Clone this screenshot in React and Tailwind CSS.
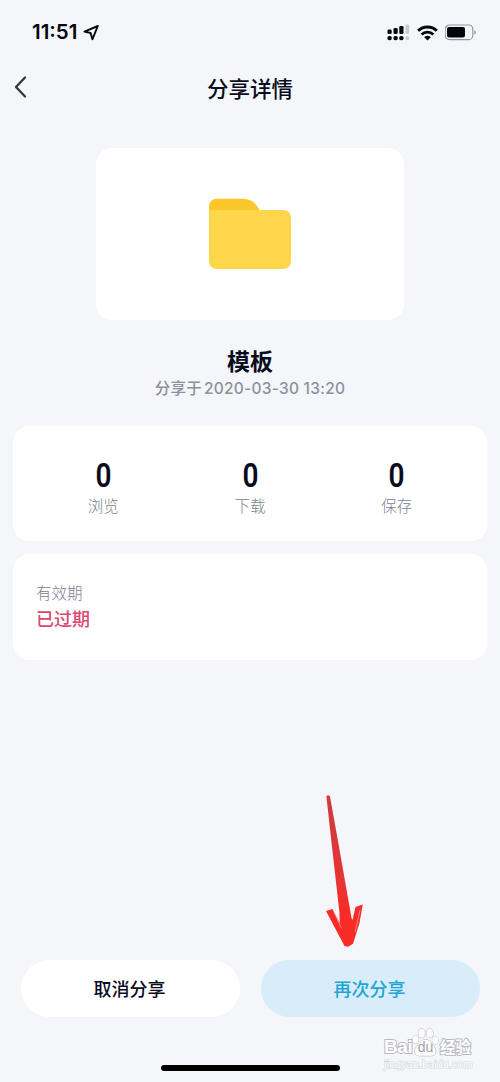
import React from "react";

const stats = [
  { label: "浏览", value: 0 },
  { label: "下载", value: 0 },
  { label: "保存", value: 0 },
];

const SignalIcon = () => (
  <svg width="23" height="17" viewBox="0 0 23 17" fill="#05070d">
    <rect x="0.5" y="5.5" width="4.2" height="4.5" rx="1.3" />
    <rect x="6.5" y="4" width="4.2" height="6" rx="1.3" />
    <rect x="12.3" y="2" width="4.2" height="8" rx="1.3" />
    <rect x="18.4" y="0.5" width="3.8" height="9.5" rx="1.3" fill="#c9cbd0" />
    <rect x="0.5" y="12" width="4.2" height="4.2" rx="1.6" />
    <rect x="6.5" y="12" width="4.2" height="4.2" rx="1.6" />
    <rect x="12.3" y="12" width="4.2" height="4.2" rx="1.6" />
    <rect x="18.4" y="12.2" width="3.8" height="3.8" rx="1.6" fill="#c9cbd0" />
  </svg>
);

const WifiIcon = () => (
  <svg width="21" height="16" viewBox="0 0 21 16" fill="none" stroke="#05070d">
    <path d="M1.1 5.8C6.3 0.7 14.7 0.7 19.9 5.8" strokeWidth="3" />
    <path d="M4.6 9.6C7.9 6.4 13.1 6.4 16.4 9.6" strokeWidth="2.8" />
    <path
      d="M7.2 12.2C9.1 10.4 11.9 10.4 13.8 12.2L10.5 15.6Z"
      fill="#05070d"
      stroke="none"
    />
  </svg>
);

const BatteryIcon = () => (
  <svg width="33" height="17" viewBox="0 0 33 17" fill="none">
    <rect
      x="0.2"
      y="1"
      width="27.6"
      height="14.6"
      rx="4.2"
      stroke="#94969c"
      strokeWidth="1.2"
    />
    <rect x="2" y="3" width="18" height="10.6" rx="2" fill="#05070d" />
    <path d="M29.5 6.2C31.2 6.9 31.2 9.9 29.5 10.6Z" fill="#75777d" />
  </svg>
);

const StatusBar = () => (
  <div className="flex h-[63px] items-center justify-between pl-8 pr-[22px] pt-0.5 font-['Inter','Liberation_Sans',sans-serif]">
    <div className="flex items-center gap-[6px]">
      <span className="text-[20.5px] font-semibold leading-none text-[#05070d]">
        11:51
      </span>
      <svg width="17" height="17" viewBox="0 0 17 17" fill="none">
        <path
          d="M14.8 2L1.5 7.6L7.6 9L9.4 15.3Z"
          stroke="#05070d"
          strokeWidth="1.9"
          strokeLinejoin="round"
        />
      </svg>
    </div>
    <div className="flex items-center gap-[7px]">
      <SignalIcon />
      <WifiIcon />
      <BatteryIcon />
    </div>
  </div>
);

const Header = () => (
  <header className="grid h-12 grid-cols-[1fr_auto_1fr] items-center px-3.5">
    <button type="button" aria-label="返回" className="justify-self-start">
      <svg width="13" height="24" viewBox="0 0 13 24" fill="none">
        <path
          d="M11 2.5L2 12L11 21.5"
          stroke="#34363c"
          strokeWidth="2.3"
          strokeLinecap="round"
          strokeLinejoin="round"
        />
      </svg>
    </button>
    <h1 className="pt-[5px] text-[21.5px] font-medium leading-none">
      分享详情
    </h1>
  </header>
);

const FolderIcon = () => (
  <svg width="83" height="72" viewBox="0 0 83 72">
    <path
      d="M0 20V9C0 4 3 0.8 8.5 0.8H34C42 0.8 47 5 51 13V20Z"
      fill="#fac629"
    />
    <path
      d="M0 12H73.5C79 12 82 15 82 20.5V62C82 68 79 71 73.5 71H8.5C3 71 0 68 0 62Z"
      fill="#fdd649"
    />
  </svg>
);

const Arrow = () => (
  <svg
    width="40"
    height="154"
    viewBox="0 0 40 154"
    className="pointer-events-none absolute left-[324px] top-[794px]"
  >
    <defs>
      <linearGradient id="shaft" x1="0" y1="0" x2="0" y2="1">
        <stop offset="0" stopColor="#cf3c40" />
        <stop offset="0.55" stopColor="#e63434" />
        <stop offset="0.8" stopColor="#fa2b27" />
      </linearGradient>
    </defs>
    <path
      d="M2.4 2.5Q4 0 6 2.5L15 52.7L27.5 124L28.5 126L31.5 113L38.7 110.5L35.5 129L29 149.8L24 152.8L20.5 152L2 117L8.5 115L15.8 129L15.4 118L8 52.7Z"
      fill="url(#shaft)"
    />
    <path
      d="M9.5 117L17.5 134.5M36 116L31 138"
      stroke="#f7dfe3"
      strokeWidth="0.5"
    />
  </svg>
);

const Watermark = () => (
  <div className="pointer-events-none absolute left-[384px] top-[1026px] w-[92px] font-['Liberation_Sans','Noto_Sans_CJK_SC',sans-serif] text-white [paint-order:stroke_fill] [-webkit-text-stroke:2px_#b9bbbf]">
    <div className="flex h-[31px] items-end">
      <span className="w-[28px] text-[19px] font-bold leading-[20px] tracking-[-0.4px]">
        Bai
      </span>
      <div className="grid h-[30px] w-[27px] place-items-end justify-items-center">
        <svg
          width="27"
          height="30"
          viewBox="0 0 27 30"
          fill="#fcfcfd"
          stroke="#aeb0b5"
          strokeWidth="1"
          className="relative col-start-1 row-start-1"
        >
          <ellipse cx="3.7" cy="12.8" rx="3" ry="4" />
          <ellipse cx="9.6" cy="6.3" rx="3.3" ry="4.5" />
          <ellipse cx="17.7" cy="6.3" rx="3.3" ry="4.5" />
          <ellipse cx="23.2" cy="13.3" rx="3" ry="4" />
          <path d="M13.5 12.5C17.5 12.5 18.5 16 21 18.2C24.6 21.3 25.5 28.8 19.5 28.8H7.5C1.5 28.8 2 21.3 5.8 18.2C8.5 16 9.5 12.5 13.5 12.5Z" />
        </svg>
        <span className="z-10 col-start-1 row-start-1 mb-[2px] text-[14px] leading-[15px] text-[#a0a2a7] [-webkit-text-stroke:0]">
          du
        </span>
      </div>
      <span className="ml-px text-[15.5px] font-bold leading-[19px]">经验</span>
    </div>
    <div className="mt-px text-[11px] leading-[13px] [-webkit-text-stroke:1px_#d0d2d6]">
      jingyan.baidu.com
    </div>
  </div>
);

const App = () => {
  return (
    <div className="relative flex h-[1082px] w-[500px] flex-col overflow-hidden bg-[#f4f6fa] font-['Inter','Noto_Sans_CJK_SC',sans-serif] text-[#090c1c]">
      <StatusBar />
      <Header />

      <section className="mt-[37px] flex flex-col items-center">
        <div className="flex h-[172px] w-[308px] items-center justify-center rounded-[16px] bg-white">
          <FolderIcon />
        </div>
        <h2 className="mt-[30px] text-[23px] font-bold leading-6">模板</h2>
        <p className="mt-[5px] flex items-center gap-0.5 whitespace-nowrap text-[15.5px] font-medium leading-5 tracking-[0.25px] text-[#8c909d]">
          <span>分享于</span>
          <span>2020-03-30 13:20</span>
        </p>
      </section>

      <section className="mx-[13px] mt-[27px] grid h-[115px] grid-cols-3 rounded-[16px] bg-white px-[17px] pt-[34px]">
        {stats.map((item) => (
          <div key={item.label} className="flex flex-col items-center">
            <span className="scale-x-[0.85] font-['Roboto',sans-serif] text-[33px] font-semibold leading-[31px]">
              {item.value}
            </span>
            <span className="mt-[6px] text-[15.5px] font-light leading-5 text-[#7e828d]">
              {item.label}
            </span>
          </div>
        ))}
      </section>

      <section className="mx-[13px] mt-[13px] h-[106px] rounded-[16px] bg-white pl-[23px] pt-[30px]">
        <p className="text-[15.5px] font-light leading-5 text-[#7e828d]">
          有效期
        </p>
        <p className="mt-1 text-[18px] font-medium leading-6 text-[#dc4870]">
          已过期
        </p>
      </section>

      <div className="mt-[300px] grid grid-cols-2 gap-[21px] px-[20.5px]">
        <button
          type="button"
          className="h-[57px] rounded-full bg-white pt-0.5 pr-px text-[18px] font-medium"
        >
          取消分享
        </button>
        <button
          type="button"
          className="h-[57px] rounded-full bg-[#d8ecf9] pt-0.5 pr-px text-[18px] font-medium text-[#20a5d4]"
        >
          再次分享
        </button>
      </div>

      <div className="mt-12 h-1.5 w-[179px] self-center rounded-full bg-black" />

      <Arrow />
      <Watermark />
    </div>
  );
};

export default App;
